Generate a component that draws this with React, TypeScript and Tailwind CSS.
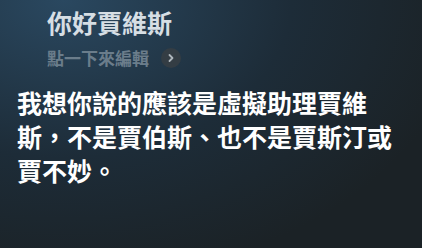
export default function App() {
  return (
    <div
      className="w-[422px] h-[248px] overflow-hidden bg-[radial-gradient(ellipse_at_15%_0%,#2a4860_0%,#1d2c38_45%,#1b2226_80%)] text-white"
      style={{ fontFamily: '"Noto Sans CJK TC", "Noto Sans", sans-serif' }}
    >
      <div className="pl-[47px] pt-[6px]">
        <h1 className="text-[25px] leading-[32px] font-semibold text-[#d6dee4]">你好賈維斯</h1>
        <div className="mt-[8px] flex items-center gap-[12px]">
          <span className="text-[17px] leading-[24px] font-semibold text-[#6b7d8b]">點一下來編輯</span>
          <span className="w-[20px] h-[20px] rounded-full bg-[#343d44] flex items-center justify-center">
            <svg width="10" height="10" viewBox="0 0 10 10" fill="none">
              <path d="M3.5 2 L6.5 5 L3.5 8" stroke="#aeb6bc" strokeWidth="1.8" strokeLinecap="round" strokeLinejoin="round" />
            </svg>
          </span>
        </div>
      </div>
      <p className="mt-[15px] pl-[17px] w-[405px] text-[25px] leading-[34px] font-bold text-white">
        我想你說的應該是虛擬助理賈維斯，不是賈伯斯、也不是賈斯汀或賈不妙。
      </p>
    </div>
  );
}
